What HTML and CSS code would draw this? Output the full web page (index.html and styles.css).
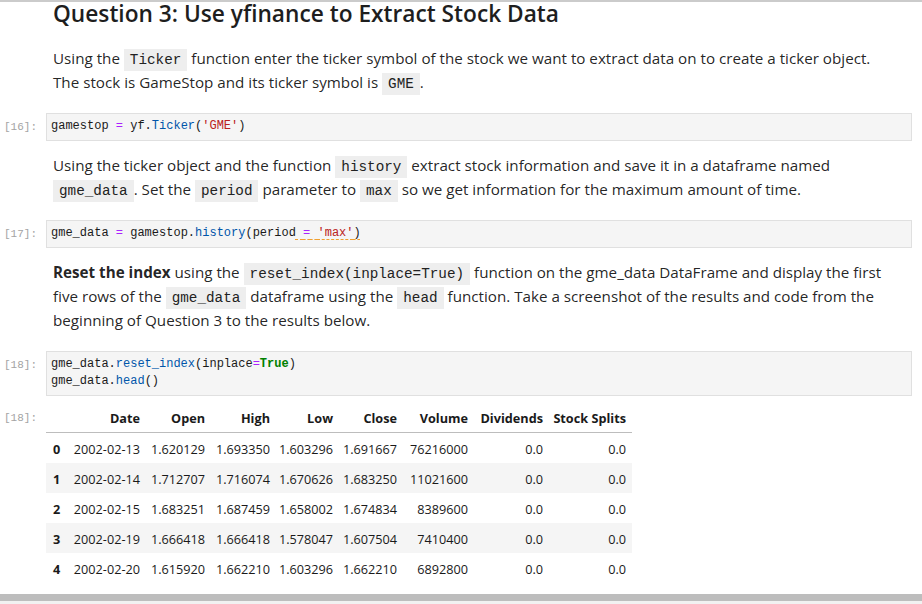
FILE: index.html
```html
<!DOCTYPE html>
<html lang="en">
<head>
<meta charset="utf-8">
<title>Question 3</title>
<link rel="stylesheet" href="styles.css">
</head>
<body>
<div class="topline"></div>
<main class="nb">
  <section class="cell md">
    <div class="prompt"></div>
    <div class="content">
      <h2 class="title">Question 3: Use yfinance to Extract Stock Data</h2>
      <p>Using the <code>Ticker</code> function enter the ticker symbol of the stock we want to extract data on to create a ticker object. The stock is GameStop and its ticker symbol is <code>GME</code>.</p>
    </div>
  </section>

  <section class="cell code">
    <div class="prompt">[16]:</div>
    <pre class="editor">gamestop <span class="op">=</span> yf.<span class="prop">Ticker</span>(<span class="str">'GME'</span>)</pre>
  </section>

  <section class="cell md">
    <div class="prompt"></div>
    <div class="content">
      <p>Using the ticker object and the function <code>history</code> extract stock information and save it in a dataframe named <code>gme_data</code>. Set the <code>period</code> parameter to <code>max</code> so we get information for the maximum amount of time.</p>
    </div>
  </section>

  <section class="cell code">
    <div class="prompt">[17]:</div>
    <pre class="editor">gme_data <span class="op">=</span> gamestop.<span class="prop">history</span>(period<span class="lint"> <span class="op">=</span> <span class="str">'max'</span>)</span></pre>
  </section>

  <section class="cell md">
    <div class="prompt"></div>
    <div class="content">
      <p><strong>Reset the index</strong> using the <code>reset_index(inplace=True)</code> function on the gme_data DataFrame and display the first five rows of the <code>gme_data</code> dataframe using the <code>head</code> function. Take a screenshot of the results and code from the beginning of Question 3 to the results below.</p>
    </div>
  </section>

  <section class="cell code">
    <div class="prompt">[18]:</div>
    <pre class="editor">gme_data.<span class="prop">reset_index</span>(inplace<span class="op">=</span><span class="kw">True</span>)
gme_data.<span class="prop">head</span>()</pre>
  </section>

  <section class="cell output">
    <div class="prompt">[18]:</div>
    <div class="out">
      <table class="df">
        <colgroup>
          <col class="c-idx"><col class="c-date"><col class="c-open"><col class="c-high"><col class="c-low"><col class="c-close"><col class="c-vol"><col class="c-div"><col class="c-split">
        </colgroup>
        <thead>
          <tr><th></th><th>Date</th><th>Open</th><th>High</th><th>Low</th><th>Close</th><th>Volume</th><th>Dividends</th><th>Stock Splits</th></tr>
        </thead>
        <tbody>
          <tr><th>0</th><td>2002-02-13</td><td>1.620129</td><td>1.693350</td><td>1.603296</td><td>1.691667</td><td>76216000</td><td>0.0</td><td>0.0</td></tr>
          <tr><th>1</th><td>2002-02-14</td><td>1.712707</td><td>1.716074</td><td>1.670626</td><td>1.683250</td><td>11021600</td><td>0.0</td><td>0.0</td></tr>
          <tr><th>2</th><td>2002-02-15</td><td>1.683251</td><td>1.687459</td><td>1.658002</td><td>1.674834</td><td>8389600</td><td>0.0</td><td>0.0</td></tr>
          <tr><th>3</th><td>2002-02-19</td><td>1.666418</td><td>1.666418</td><td>1.578047</td><td>1.607504</td><td>7410400</td><td>0.0</td><td>0.0</td></tr>
          <tr><th>4</th><td>2002-02-20</td><td>1.615920</td><td>1.662210</td><td>1.603296</td><td>1.662210</td><td>6892800</td><td>0.0</td><td>0.0</td></tr>
        </tbody>
      </table>
    </div>
  </section>
</main>
<div class="hscroll"><div class="hscroll-track"></div></div>
</body>
</html>
```

FILE: styles.css
```css
html, body {
  margin: 0;
  padding: 0;
  background: #ffffff;
}

body {
  width: 922px;
  height: 604px;
  overflow: hidden;
  display: flex;
  flex-direction: column;
  font-family: "Open Sans", "Noto Sans", sans-serif;
  color: rgba(0, 0, 0, 0.87);
}

.topline {
  height: 2px;
  background: #cbcbcb;
  flex: none;
}

.nb {
  flex: 1;
  padding-right: 10px;
}

.cell {
  display: grid;
  grid-template-columns: 46px 1fr;
  margin-top: 12px;
}

.cell:first-child {
  margin-top: 0;
}

.prompt {
  font-family: "Liberation Mono", "DejaVu Sans Mono", monospace;
  font-size: 11px;
  color: #a3a3a3;
  text-align: right;
  padding-right: 9px;
  line-height: 17px;
  padding-top: 6px;
}

.md .content {
  padding-left: 7px;
  padding-right: 15px;
  padding-bottom: 7px;
}

.title {
  margin: 0 0 20px 0;
  font-size: 22.7px;
  line-height: 24px;
  font-weight: 600;
  color: #1e1e1e;
}

.content p {
  margin: 0;
  font-size: 15.2px;
  line-height: 24px;
}

.content strong {
  font-weight: 700;
}

.content code {
  font-family: "Liberation Mono", "DejaVu Sans Mono", monospace;
  font-size: 14.3px;
  line-height: 1;
  background: #eeeeee;
  padding: 3px 6px;
  color: #222222;
}

.editor {
  margin: 0;
  background: #f5f5f5;
  border: 1px solid #e0e0e0;
  padding: 4px 4px 5px 4px;
  font-family: "Liberation Mono", "DejaVu Sans Mono", monospace;
  font-size: 12px;
  line-height: 17px;
  color: #1a1a1a;
}

.op { color: #aa22ff; }
.prop { color: #0055aa; }
.str { color: #ba2121; }
.kw { color: #008000; font-weight: bold; }

.lint {
  text-decoration: underline dashed #f0a030;
  text-underline-offset: 3px;
}

.output {
  margin-top: 7px;
}

.output .prompt {
  padding-top: 7px;
}

.df {
  border-collapse: collapse;
  table-layout: fixed;
  width: 586px;
  font-size: 12.7px;
  color: #1a1a1a;
}

.c-idx { width: 20px; }
.c-date { width: 80px; }
.c-open { width: 65px; }
.c-high { width: 65px; }
.c-low { width: 63px; }
.c-close { width: 64px; }
.c-vol { width: 71px; }
.c-div { width: 75px; }
.c-split { width: 83px; }

.df th, .df td {
  padding: 0 6px 0 2px;
  text-align: right;
  white-space: nowrap;
  line-height: 18px;
  vertical-align: middle;
}

.df thead th {
  height: 29px;
  font-weight: 700;
  border-bottom: 1px solid #bdbdbd;
}

.df tbody th {
  text-align: left;
  padding-left: 7px;
  font-weight: 700;
}

.df tbody td, .df tbody th {
  height: 29px;
  padding-top: 1px;
}

.df tbody tr:nth-child(even) {
  background: #f5f5f5;
}

.hscroll {
  flex: none;
  height: 10px;
  background: #f1f1f1;
  display: flex;
  flex-direction: column;
}

.hscroll-track {
  height: 7px;
  background: #bdbdbd;
}
```
